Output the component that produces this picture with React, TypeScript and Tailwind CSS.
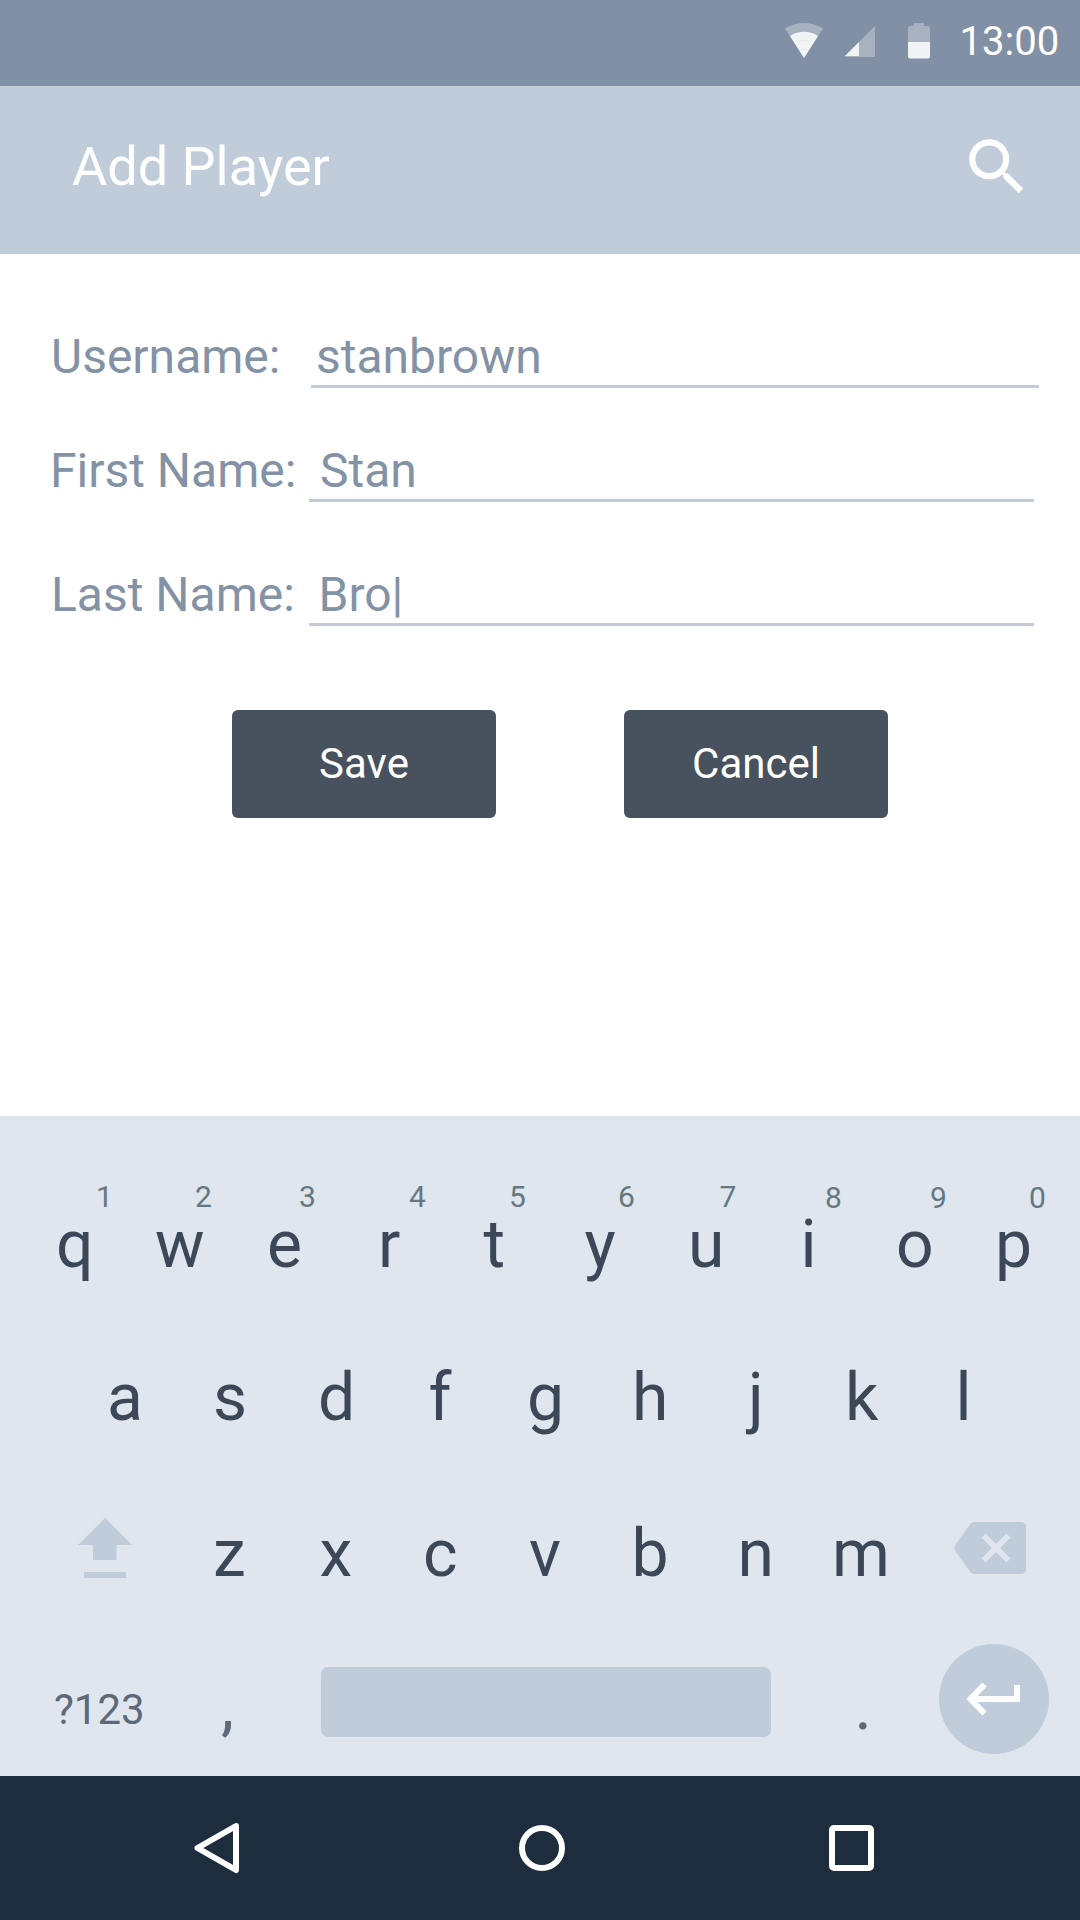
const BACKSPACE =
  "M1 23.6 L15.2 3.2 Q17.4 0 21 0 H66.5 Q72 0 72 5.5 V46.5 Q72 52 66.5 52 H21 Q17.4 52 15.2 48.8 L1 28.4 Q-.4 26 1 23.6 Z";

type HintKey = { k: string; w: string; n: string; hint: string };

const topRow: HintKey[] = [
  { k: "q", w: "w-[99px]", n: "1", hint: "ml-[40px]" },
  { k: "w", w: "w-[112px]", n: "2", hint: "ml-[40px]" },
  { k: "e", w: "w-[111px]", n: "3", hint: "ml-[32px]" },
  { k: "r", w: "w-[105.5px]", n: "4", hint: "ml-[31px]" },
  { k: "t", w: "w-[101px]", n: "5", hint: "ml-[25.5px]" },
  { k: "y", w: "w-[103.5px]", n: "6", hint: "ml-[33.5px]" },
  { k: "u", w: "w-[112.5px]", n: "7", hint: "ml-[31.5px]" },
  { k: "i", w: "w-[95.5px]", n: "8", hint: "ml-[24.5px] mt-px -mb-px" },
  { k: "o", w: "w-[99px]", n: "9", hint: "ml-[34px] mt-px -mb-px" },
  { k: "p", w: "w-[80px]", n: "0", hint: "ml-[34px] mt-px -mb-px" },
];

const middleRow = [
  { k: "a", w: "w-[106px]" },
  { k: "s", w: "w-[105px]" },
  { k: "d", w: "w-[110.5px]" },
  { k: "f", w: "w-[98.5px]" },
  { k: "g", w: "w-[105px]" },
  { k: "h", w: "w-[116px]" },
  { k: "j", w: "w-[97px]" },
  { k: "k", w: "w-[110.5px]" },
  { k: "l", w: "w-[40px]" },
];

const bottomRow = [
  { k: "z", w: "w-[106.5px]" },
  { k: "x", w: "w-[103.5px]" },
  { k: "c", w: "w-[106px]" },
  { k: "v", w: "w-[102.5px]" },
  { k: "b", w: "w-[106px]" },
  { k: "n", w: "w-[94.5px]" },
  { k: "m", w: "w-[121.5px]" },
];

function StatusBar() {
  return (
    <div className="flex h-[86px] items-start bg-[#8190a5] pl-[785px] text-white">
      <svg className="mt-[23px] h-[35px] w-[38px]" viewBox="0 0 38 35">
        <path d="M0 5.6 Q8.5 0 19 0 T38 5.6 L19 35 Z" fill="#fff" fillOpacity=".3" />
        <path d="M5 13 Q11.5 8.8 19 8.8 T33 13 L19 35 Z" fill="#f1f3f5" />
        <path d="M13 18.500 Q19 16 25 18.500 M16 26.500 Q19 25.500 22 26.500" fill="none" stroke="#dfe2e6" strokeWidth=".7" />
      </svg>
      <svg className="mt-[26px] ml-[21px] h-[31px] w-[31px]" viewBox="0 0 31 31">
        <path d="M0 31 L31 0 V31 Z" fill="#fff" fillOpacity=".3" />
        <path d="M1 30 L15 16 V30 Z" fill="#f1f3f5" />
      </svg>
      <svg className="mt-[23px] ml-[33px] h-[36px] w-[22px]" viewBox="0 0 22 36">
        <path d="M5.5 0 H16 V3 H20 Q22 3 22 5 V19 H0 V5 Q0 3 2 3 H5.5 Z" fill="#fff" fillOpacity=".3" />
        <path d="M0 19 H22 V33.5 Q22 35.5 20 35.5 H2 Q0 35.5 0 33.5 Z" fill="#f1f3f5" />
      </svg>
      <span className="mt-[22px] ml-[29.5px] text-[40px] leading-[40px]">13:00</span>
    </div>
  );
}

function Header() {
  return (
    <header className="flex h-[168px] items-start bg-[#c0ccda] pl-[72px] text-white">
      <h1 className="mt-[54px] w-[888px] text-[54px] leading-[54px]">Add Player</h1>
      <svg className="mt-[44px] h-[74px] w-[74px]" viewBox="0 0 24 24" fill="currentColor">
        <path d="M15.5 14h-.79l-.28-.27C15.41 12.59 16 11.11 16 9.5 16 5.91 13.09 3 9.5 3S3 5.91 3 9.5 5.91 16 9.5 16c1.61 0 3.09-.59 4.23-1.57l.27.28v.79l5 4.99L20.49 19l-4.99-5zm-6 0C7.01 14 5 11.99 5 9.5S7.01 5 9.5 5 14 7.01 14 9.5 11.99 14 9.5 14z" />
      </svg>
    </header>
  );
}

function Field({ label, value, row, text, line }: { label: string; value: string; row: string; text: string; line: string }) {
  return (
    <div className={`flex h-[55px] text-[48px] leading-[48px] text-[#8492a6] ${row}`}>
      <label className={text}>{label}</label>
      <div className={`border-b-[3px] border-[#c0ccda] whitespace-pre ${line}`}>{value}</div>
    </div>
  );
}

export default function App() {
  return (
    <div className="flex h-[1920px] w-[1080px] flex-col overflow-hidden bg-white font-['Roboto',sans-serif]">
      <StatusBar />
      <Header />
      <main className="h-[862px] pt-[79px]">
        <Field label="Username:" value="stanbrown" row="pl-[51px]" text="w-[260px]" line="w-[728px] pl-[5px]" />
        <Field label="First Name:" value="Stan" row="mt-[59px] pl-[50px]" text="w-[259px]" line="w-[725px] pl-[11px]" />
        <Field label="Last Name:" value="Bro|" row="mt-[69px] pl-[51px]" text="w-[258px]" line="w-[725px] pl-[9.5px]" />
        <div className="mt-[84px] flex gap-[128px] pl-[232px] text-[42px] text-white">
          <button className="h-[108px] w-[264px] rounded-[6px] bg-[#48525e] pb-[2px]">Save</button>
          <button className="h-[108px] w-[264px] rounded-[6px] bg-[#48525e] pb-[2px]">Cancel</button>
        </div>
      </main>
      <section className="h-[660px] bg-[#dfe6ee] pt-[66px] text-[66px] leading-[66px] text-[#3c4858]">
        <div className="flex pl-[56px]">
          {topRow.map((key) => (
            <div key={key.k} className={`flex shrink-0 flex-col items-start ${key.w}`}>
              <span className={`text-[30px] leading-[30px] text-[#657882] ${key.hint}`}>{key.n}</span>
              <span>{key.k}</span>
            </div>
          ))}
        </div>
        <div className="mt-[87px] flex pl-[107px]">
          {middleRow.map((key) => (
            <span key={key.k} className={`shrink-0 ${key.w}`}>{key.k}</span>
          ))}
        </div>
        <div className="mt-[87px] flex h-[69px] pl-[78px]">
          <svg className="mr-[81px] h-[60px] w-[54px] shrink-0 text-[#c0ccda]" viewBox="0 0 54 60" fill="currentColor">
            <path d="M27 0 L54 27 H38.500 V42 H15 V27 H0 Z M6 54 H48 V60 H6 Z" />
          </svg>
          {bottomRow.map((key) => (
            <span key={key.k} className={`mt-[3px] shrink-0 ${key.w}`}>{key.k}</span>
          ))}
          <svg className="mt-[4px] h-[52px] w-[72px] shrink-0" viewBox="0 0 72 52">
            <path d={BACKSPACE} fill="#c0ccda" />
            <path d="M29.5 13.5 L54.5 38.5 M54.5 13.5 L29.5 38.5" stroke="#dfe6ee" strokeWidth="6" />
          </svg>
        </div>
        <div className="mt-[57px] flex text-[#5d6879]">
          <span className="mt-[45px] ml-[54px] w-[165px] text-[42px] leading-[42px]">?123</span>
          <span className="mt-[29px] ml-[2px] w-[100px]">,</span>
          <div className="mt-[23px] h-[70px] w-[450px] rounded-[7px] bg-[#c0ccda]" />
          <span className="mt-[30px] ml-[83.5px] w-[84.5px]">.</span>
          <div className="flex h-[110px] w-[110px] items-center justify-center rounded-full bg-[#c0ccda]">
            <svg className="mr-[3px] h-[36px] w-[54px]" viewBox="0 0 54 36" fill="none" stroke="#fff" strokeWidth="6">
              <path d="M18.5 3.5 L4.5 18 L18.5 32.5 M4.5 18 H51 V4" />
            </svg>
          </div>
        </div>
      </section>
      <nav className="flex h-[144px] items-start bg-[#1e2d3d] pl-[194px] text-white">
        <svg className="mt-[46px] h-[52px] w-[46px]" viewBox="0 0 46 52" fill="none" stroke="currentColor" strokeWidth="6" strokeLinejoin="round">
          <path d="M42 4 L3.500 26 L42 48 Z" />
        </svg>
        <div className="mt-[49px] ml-[279px] h-[46px] w-[46px] rounded-full border-[6px] border-white" />
        <div className="mt-[49px] ml-[264px] h-[46px] w-[45px] rounded-[5px] border-[6px] border-white" />
      </nav>
    </div>
  );
}
